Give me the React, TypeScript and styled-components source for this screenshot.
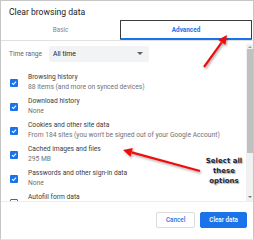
import React from "react";
import styled, { createGlobalStyle } from "styled-components";

const GlobalStyle = createGlobalStyle`
    html, body {
        margin: 0;
        padding: 0;
        background: #ffffff;
    }
    * {
        box-sizing: border-box;
    }
`;

//=========================
//      DIALOG SHELL
//=========================

const Dialog = styled.div`
    position: relative;
    width: 254px;
    height: 240px;
    display: flex;
    flex-direction: column;
    border: 1px solid #c6c6c6;
    border-bottom-color: #e4e4e4;
    background: #fff;
    overflow: hidden;
    font-family: Roboto, "Liberation Sans", sans-serif;
    color: #202124;
`;

const Title = styled.div`
    height: 19px;
    padding: 6px 0 0 8px;
    font-size: 8.6px;
    line-height: 10px;
    color: #202124;
`;

const TabBar = styled.div`
    display: flex;
    height: 21px;
    border-bottom: 1px solid #e0e0e0;
`;

const Tab = styled.div<{ $active?: boolean }>`
    flex: ${(p) => (p.$active ? "0 0 132px" : "0 0 119px")};
    display: flex;
    align-items: center;
    justify-content: center;
    font-size: 6.4px;
    color: ${(p) => (p.$active ? "#1a73e8" : "#80868b")};
    font-weight: ${(p) => (p.$active ? 700 : 400)};
    border: ${(p) => (p.$active ? "1px solid #3c3c3c" : "none")};
    border-bottom: ${(p) => (p.$active ? "2px solid #1a73e8" : "none")};
    border-radius: 1px;
`;

//=========================
//      SCROLL BODY
//=========================

const BodyArea = styled.div`
    display: flex;
    height: 160px;
`;

const Content = styled.div`
    flex: 1;
    padding: 3px 0 0 8px;
    overflow: hidden;
`;

const RangeRow = styled.div`
    display: flex;
    align-items: center;
    gap: 7px;
    height: 17px;
    margin-top: 1px;
    margin-bottom: 8px;
`;

const Label = styled.span`
    font-size: 6.6px;
    color: #5f6368;
`;

const Select = styled.div`
    width: 100px;
    height: 16px;
    display: flex;
    align-items: center;
    justify-content: space-between;
    padding: 0 4px;
    background: #f1f3f4;
    border-radius: 2px;
    font-size: 6.8px;
    color: #202124;
`;

const Caret = styled.span`
    width: 0;
    height: 0;
    border-left: 3px solid transparent;
    border-right: 3px solid transparent;
    border-top: 3px solid #5f6368;
    margin-right: 2px;
`;

const OptionRow = styled.div`
    display: flex;
    align-items: center;
    height: 24.1px;
    flex-shrink: 0;
`;

const Check = styled.div<{ $on: boolean }>`
    width: 8px;
    height: 8px;
    flex: 0 0 8px;
    border-radius: 1px;
    margin: 1px 10px 0 1px;
    display: flex;
    align-items: center;
    justify-content: center;
    background: ${(p) => (p.$on ? "#1a73e8" : "#fff")};
    border: ${(p) => (p.$on ? "none" : "1.2px solid #5f6368")};
`;

const OptionText = styled.div`
    display: flex;
    flex-direction: column;
    gap: 1px;
    white-space: nowrap;
`;

const OptionTitle = styled.span`
    font-size: 6.7px;
    line-height: 9px;
    color: #3c4043;
`;

const OptionSub = styled.span`
    font-size: 6.7px;
    line-height: 9px;
    color: #6f7378;
`;

const Scrollbar = styled.div`
    width: 7px;
    margin-top: 3px;
    display: flex;
    flex-direction: column;
    align-items: center;
    background: #f1f1f1;
`;

const ScrollArrow = styled.span<{ $down?: boolean }>`
    width: 0;
    height: 0;
    border-left: 2px solid transparent;
    border-right: 2px solid transparent;
    ${(p) =>
        p.$down
            ? "border-top: 2px solid #777; margin: 2px 0 3px;"
            : "border-bottom: 2px solid #999; margin: 2px 0 1px;"}
`;

const Thumb = styled.div`
    width: 6px;
    height: 104px;
    background: #c1c1c1;
`;

const Track = styled.div`
    flex: 1;
`;

//=========================
//      FOOTER
//=========================

const Footer = styled.div`
    flex: 1;
    display: flex;
    justify-content: flex-end;
    align-items: center;
    gap: 5px;
    padding: 0 6px 2px 0;
    border-top: 1px solid #ececec;
`;

const Button = styled.button<{ $primary?: boolean }>`
    height: 16px;
    padding: 0 ${(p) => (p.$primary ? "8px" : "9px")};
    border-radius: 2px;
    font-family: Roboto, "Liberation Sans", sans-serif;
    font-size: 6.3px;
    font-weight: 500;
    cursor: pointer;
    color: ${(p) => (p.$primary ? "#fff" : "#1a73e8")};
    background: ${(p) => (p.$primary ? "#1a73e8" : "#fff")};
    border: 1px solid ${(p) => (p.$primary ? "#1a73e8" : "#dadce0")};
`;

//=========================
//      ANNOTATIONS
//=========================

const Overlay = styled.svg`
    position: absolute;
    left: 0;
    top: 0;
    pointer-events: none;
`;

const Callout = styled.div`
    position: absolute;
    left: 201px;
    top: 155px;
    width: 44px;
    text-align: center;
    font-family: "DejaVu Sans", sans-serif;
    font-weight: 700;
    font-size: 7px;
    line-height: 10px;
    color: #1f2433;
    text-shadow: 1px 1px 1px rgba(0, 0, 0, 0.35);
`;

const CheckMark = () => (
    <svg width="6" height="6" viewBox="0 0 6 6">
        <path d="M1 3.2 L2.4 4.5 L5 1.6" stroke="#fff" strokeWidth="1.1" fill="none" />
    </svg>
);

const options = [
    { title: "Browsing history", sub: "88 items (and more on synced devices)", on: true },
    { title: "Download history", sub: "None", on: true },
    { title: "Cookies and other site data", sub: "From 184 sites (you won't be signed out of your Google Account)", on: true },
    { title: "Cached images and files", sub: "295 MB", on: true },
    { title: "Passwords and other sign-in data", sub: "None", on: true },
    { title: "Autofill form data", sub: "", on: false },
];

const Arrow = ({ x1, y1, x2, y2 }: { x1: number; y1: number; x2: number; y2: number }) => {
    const a = Math.atan2(y2 - y1, x2 - x1);
    const len = 9;
    const w = 4.5;
    const bx = x2 - len * Math.cos(a);
    const by = y2 - len * Math.sin(a);
    const px = -Math.sin(a) * w;
    const py = Math.cos(a) * w;
    return (
        <g filter="url(#shadow)">
            <line x1={x1} y1={y1} x2={bx} y2={by} stroke="#ee1111" strokeWidth="2.2" />
            <polygon points={`${x2},${y2} ${bx + px},${by + py} ${bx - px},${by - py}`} fill="#ee1111" />
        </g>
    );
};

export default function App() {
    return (
        <>
            <GlobalStyle />
            <Dialog>
                <Title>Clear browsing data</Title>
                <TabBar>
                    <Tab>Basic</Tab>
                    <Tab $active>Advanced</Tab>
                </TabBar>
                <BodyArea>
                    <Content>
                        <RangeRow>
                            <Label>Time range</Label>
                            <Select>
                                All time
                                <Caret />
                            </Select>
                        </RangeRow>
                        {options.map((o) => (
                            <OptionRow key={o.title}>
                                <Check $on={o.on}>{o.on && <CheckMark />}</Check>
                                <OptionText>
                                    <OptionTitle>{o.title}</OptionTitle>
                                    <OptionSub>{o.sub || "\u00a0"}</OptionSub>
                                </OptionText>
                            </OptionRow>
                        ))}
                    </Content>
                    <Scrollbar>
                        <ScrollArrow />
                        <Thumb />
                        <Track />
                        <ScrollArrow $down />
                    </Scrollbar>
                </BodyArea>
                <Footer>
                    <Button>Cancel</Button>
                    <Button $primary>Clear data</Button>
                </Footer>
                <Overlay width="254" height="240" viewBox="0 0 254 240">
                    <defs>
                        <filter id="shadow" x="-20%" y="-20%" width="140%" height="140%">
                            <feDropShadow dx="1" dy="1.5" stdDeviation="0.8" floodColor="#000" floodOpacity="0.35" />
                        </filter>
                    </defs>
                    <Arrow x1={203} y1={66} x2={226} y2={34} />
                    <Arrow x1={199} y1={170} x2={122} y2={149} />
                </Overlay>
                <Callout>
                    Select all
                    <br />
                    these
                    <br />
                    options
                </Callout>
            </Dialog>
        </>
    );
}
